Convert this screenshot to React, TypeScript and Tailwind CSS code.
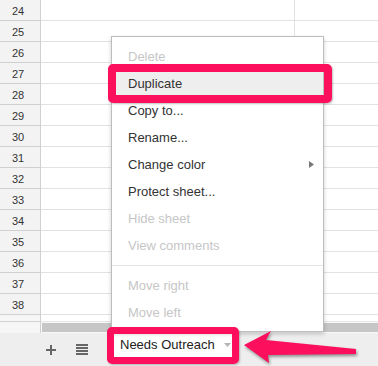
import React from "react";

type Item = { label: string; disabled?: boolean; hl?: boolean; sub?: boolean };

const topItems: Item[] = [
  { label: "Delete", disabled: true },
  { label: "Duplicate", hl: true },
  { label: "Copy to..." },
  { label: "Rename..." },
  { label: "Change color", sub: true },
  { label: "Protect sheet..." },
  { label: "Hide sheet", disabled: true },
  { label: "View comments", disabled: true },
];

const bottomItems: Item[] = [
  { label: "Move right", disabled: true },
  { label: "Move left", disabled: true },
];

function MenuItem({ item }: { item: Item }) {
  return (
    <div
      className={
        "flex h-[27px] items-center justify-between pl-[16px] pr-[9px] text-[13px] " +
        (item.disabled ? "text-[#c6c6c6] " : "text-[#333333] ") +
        (item.hl ? "bg-[#eeeeee]" : "")
      }
    >
      <span>{item.label}</span>
      {item.sub && (
        <svg width="5" height="7" viewBox="0 0 5 7">
          <polygon points="0,0 5,3.5 0,7" fill="#777777" />
        </svg>
      )}
    </div>
  );
}

export default function App() {
  const rows = Array.from({ length: 15 }, (_, i) => 24 + i);
  return (
    <div className="relative flex h-[366px] w-[378px] flex-col overflow-hidden bg-white font-['Liberation_Sans',Arial,sans-serif]">
      {/* grid rows */}
      {rows.map((n) => (
        <div key={n} className="flex h-[21px] shrink-0">
          <div className="box-border flex w-[41px] items-center justify-center border-b border-r border-[#d0d0d0] bg-[#f3f3f3] pr-[4px] pt-[2px] text-[11px] text-[#333333]">
            {n}
          </div>
          <div className="box-border w-[254px] border-b border-r border-[#e2e2e2]" />
          <div className="box-border flex-1 border-b border-[#e2e2e2]" />
        </div>
      ))}
      {/* partial row */}
      <div className="flex h-[7px] shrink-0">
        <div className="box-border w-[41px] border-b border-r border-[#d0d0d0] bg-[#f6f6f6]" />
        <div className="box-border flex-1 border-b border-[#e6e6e6]" />
      </div>
      {/* horizontal scrollbar */}
      <div className="flex h-[11px] shrink-0">
        <div className="box-border w-[41px] border-r border-[#d0d0d0] bg-[#f6f6f6]" />
        <div className="flex-1 bg-[#f8f8f8] pl-[1px] pt-[1px]">
          <div className="h-[9px] w-full bg-[#c6c6c6]" />
        </div>
      </div>
      {/* bottom bar */}
      <div className="flex h-[33px] shrink-0 items-start bg-[#eeeeee]">
        <div className="flex h-[33px] items-center pl-[46px]">
          <svg width="10" height="10" viewBox="0 0 10 10">
            <rect x="4" y="0" width="2" height="10" fill="#666666" />
            <rect x="0" y="4" width="10" height="2" fill="#666666" />
          </svg>
        </div>
        <div className="flex h-[33px] items-center pl-[20px]">
          <svg width="12" height="11" viewBox="0 0 12 11">
            <rect x="0" y="0" width="12" height="2" fill="#666666" />
            <rect x="0" y="3" width="12" height="2" fill="#666666" />
            <rect x="0" y="6" width="12" height="2" fill="#666666" />
            <rect x="0" y="9" width="12" height="2" fill="#666666" />
          </svg>
        </div>
        <div className="ml-[26px] flex h-[24px] w-[118px] items-center bg-white pl-[6px] text-[13px] text-[#222222]">
          <span>Needs Outreach</span>
          <svg className="ml-[9px]" width="7" height="4" viewBox="0 0 7 4">
            <polygon points="0,0 7,0 3.5,4" fill="#b5b5b5" />
          </svg>
        </div>
      </div>

      {/* context menu */}
      <div className="absolute left-[111px] top-[36px] box-border h-[296px] w-[213px] border border-[#bdbdbd] bg-white py-[6px] shadow-[0_2px_4px_rgba(0,0,0,0.2)]">
        {topItems.map((it) => (
          <MenuItem key={it.label} item={it} />
        ))}
        <div className="my-[6px] h-px bg-[#e5e5e5]" />
        {bottomItems.map((it) => (
          <MenuItem key={it.label} item={it} />
        ))}
      </div>

      {/* highlight boxes */}
      <div className="absolute left-[108px] top-[64px] box-border h-[39px] w-[224px] rounded-[5px] border-[8px] border-[#fc0f5c] shadow-[1px_1px_2px_rgba(0,0,0,0.25)]" />
      <div className="absolute left-[107px] top-[327px] box-border h-[37px] w-[132px] rounded-[5px] border-[7px] border-[#fc0f5c] shadow-[1px_1px_2px_rgba(0,0,0,0.25)]" />

      {/* arrow */}
      <svg
        className="absolute left-[240px] top-[326px] drop-shadow-[1px_2px_1.5px_rgba(0,0,0,0.4)]"
        width="124"
        height="40"
        viewBox="0 0 124 40"
      >
        <polygon
          points="4,19 31,5 26,14 116,23 116,28 28,29 29,37"
          fill="#fc0f5c"
        />
      </svg>
    </div>
  );
}
